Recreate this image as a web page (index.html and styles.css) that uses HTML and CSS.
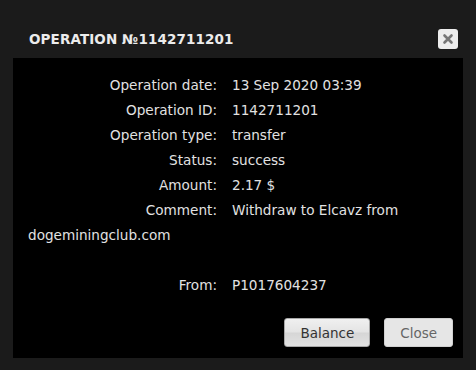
FILE: index.html
```html
<!DOCTYPE html>
<html>
<head>
<meta charset="utf-8">
<link rel="stylesheet" href="styles.css">
</head>
<body>
<div class="dialog">
  <div class="header">
    <div class="title">OPERATION №1142711201</div>
    <button class="x-btn" aria-label="close">
      <svg width="12" height="12" viewBox="0 0 12 12"><path d="M2.5 2.5 L9.5 9.5 M9.5 2.5 L2.5 9.5" stroke="#777" stroke-width="2.6" stroke-linecap="round"/></svg>
    </button>
  </div>
  <div class="panel">
    <div class="info">
      <div class="row"><span class="label">Operation date:</span><span class="value">13 Sep 2020 03:39</span></div>
      <div class="row"><span class="label">Operation ID:</span><span class="value">1142711201</span></div>
      <div class="row"><span class="label">Operation type:</span><span class="value">transfer</span></div>
      <div class="row"><span class="label">Status:</span><span class="value">success</span></div>
      <div class="row"><span class="label">Amount:</span><span class="value">2.17 $</span></div>
      <div class="row"><span class="label">Comment:</span><span class="value">Withdraw to Elcavz from<br>dogeminingclub.com<br>&nbsp;</span></div>
      <div class="row"><span class="label">From:</span><span class="value">P1017604237</span></div>
    </div>
    <div class="actions">
      <button class="btn btn-primary">Balance</button>
      <button class="btn btn-muted">Close</button>
    </div>
  </div>
</div>
</body>
</html>
```

FILE: styles.css
```css
html, body {
  margin: 0;
  padding: 0;
  background: #1b1b1b;
  height: 100%;
}
.dialog {
  padding: 0 13px 12px;
  font-family: "DejaVu Sans", sans-serif;
}
.header {
  display: flex;
  align-items: center;
  justify-content: space-between;
  padding: 29px 5px 9px 16px;
  height: 20px;
}
.title {
  color: #ececec;
  font-weight: bold;
  font-size: 13.5px;
  letter-spacing: 0.1px;
  line-height: 20px;
}
.x-btn {
  width: 20px;
  height: 20px;
  padding: 0;
  border: none;
  border-radius: 3px;
  background: #ededed;
  display: flex;
  align-items: center;
  justify-content: center;
}
.panel {
  background: #000;
  height: 300px;
  box-sizing: border-box;
  padding: 15px 10px 10px 15px;
  display: flex;
  flex-direction: column;
}
.info {
  color: #e2e2e2;
  font-size: 13.6px;
  line-height: 25px;
}
.label {
  display: inline-block;
  width: 189px;
  margin-right: 15px;
  text-align: right;
}
.actions {
  display: flex;
  justify-content: flex-end;
  gap: 14px;
  margin-top: 20px;
}
.btn {
  height: 29px;
  padding: 0 15px;
  font-family: "DejaVu Sans", sans-serif;
  font-size: 13.5px;
  border-radius: 3px;
  cursor: pointer;
}
.btn-primary {
  color: #333;
  border: 1px solid #a8a8a8;
  background: linear-gradient(#f0f0f0 0%, #e4e4e4 48%, #d6d6d6 52%, #e2e2e2 100%);
}
.btn-muted {
  color: #666;
  border: 1px solid #d0d0d0;
  background: #e6e6e6;
}
```
